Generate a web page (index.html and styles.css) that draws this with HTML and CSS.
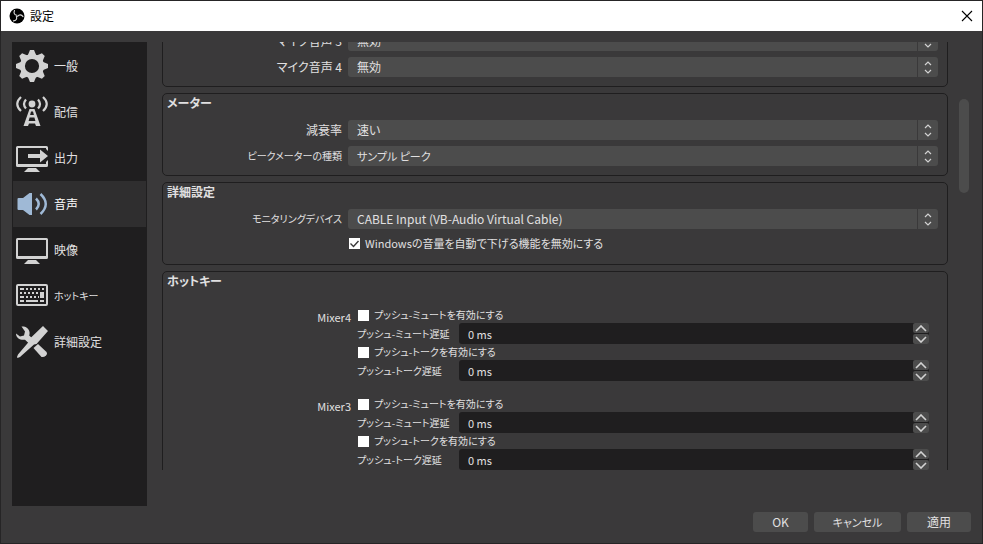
FILE: index.html
```html
<!DOCTYPE html>
<html lang="ja">

<head>
  <meta charset="UTF-8">
  <meta name="viewport" content="width=device-width, initial-scale=1.0">
  <title>設定</title>
  <link rel="stylesheet" href="styles.css">
</head>

<body>
  <header class="titlebar">
    <svg class="logo" viewBox="0 0 16 16" width="16" height="16">
      <circle cx="8" cy="8" r="7.5" fill="#000"/>
      <g fill="none" stroke="#ddd" stroke-width="1.1" stroke-linecap="round">
        <path d="M5.500 2.500C4.300 4.800 5.500 7 8 7.300"/>
        <path d="M5.500 2.500C4.300 4.800 5.500 7 8 7.300" transform="rotate(120 8 8)"/>
        <path d="M5.500 2.500C4.300 4.800 5.500 7 8 7.300" transform="rotate(240 8 8)"/>
      </g>
    </svg>
    <h1>設定</h1>
    <button class="close" aria-label="閉じる">
      <svg viewBox="0 0 12 12" width="12" height="12"><path d="M1 1l10 10M11 1L1 11" stroke="#000" stroke-width="1.1"/></svg>
    </button>
  </header>

  <main class="main">
    <nav class="sidebar">
      <a href="#general">
        <svg viewBox="0 0 32 32">
          <circle cx="16" cy="16" r="9.6" fill="none" stroke="currentColor" stroke-width="5"/>
          <g fill="currentColor">
            <path id="tooth" d="M11.500 6L14 0h4l2.500 6z"/>
            <use href="#tooth" transform="rotate(45 16 16)"/>
            <use href="#tooth" transform="rotate(90 16 16)"/>
            <use href="#tooth" transform="rotate(135 16 16)"/>
            <use href="#tooth" transform="rotate(180 16 16)"/>
            <use href="#tooth" transform="rotate(225 16 16)"/>
            <use href="#tooth" transform="rotate(270 16 16)"/>
            <use href="#tooth" transform="rotate(315 16 16)"/>
          </g>
        </svg>
        一般
      </a>
      <a href="#stream">
        <svg viewBox="0 0 32 32">
          <circle cx="16" cy="8" r="3.4" fill="currentColor"/>
          <g fill="none" stroke="currentColor" stroke-width="2.2">
            <path d="M10 3.500q-4 4.500 0 9M5 1q-7.500 7 0 14M22 3.500q4 4.500 0 9M27 1q7.500 7 0 14"/>
          </g>
          <path fill="currentColor" fill-rule="evenodd" d="M13.500 13h5L24.500 30h-4.500l-1-2.500h-6L12 30H7.500zM15 15.500l-.9 3.500h3.800l-.9-3.500zM13.600 21.500l-1 3.500h6.800l-1-3.500z"/>
        </svg>
        配信
      </a>
      <a href="#output">
        <svg viewBox="0 0 32 32" fill="currentColor">
          <path d="M1.500 4h29q1.500 0 1.500 1.500V9l-2-2V6H2v16h28v-2l2-2v5.500q0 1.500-1.500 1.500h-29Q0 25 0 23.500v-18Q0 4 1.500 4z"/>
          <path d="M12 12h12V7.500l8 6.500-8 6.500V16H12zM12 26h8l4 4H8z"/>
        </svg>
        出力
      </a>
      <a href="#audio" class="active">
        <svg viewBox="0 0 32 32">
          <path fill="currentColor" d="M2.500 10H7l6.500-5H16v22h-2.500L7 22H2.500q-1 0-1-1V11q0-1 1-1z"/>
          <path fill="none" stroke="currentColor" stroke-width="2.500" d="M20 10.500q5.500 5.500 0 11M24.500 6q10.500 10 0 20"/>
        </svg>
        音声
      </a>
      <a href="#video">
        <svg viewBox="0 0 32 32" fill="currentColor">
          <path fill-rule="evenodd" d="M1.500 4h29q1.500 0 1.500 1.500v18q0 1.500-1.500 1.500h-29Q0 25 0 23.500v-18Q0 4 1.500 4zM2 6v16h28V6z"/>
          <path d="M12 26h8l4 4H8z"/>
        </svg>
        映像
      </a>
      <a href="#hotkeys" class="long">
        <svg viewBox="0 0 32 32">
          <rect x="1" y="5" width="30" height="20" rx="1" fill="none" stroke="currentColor" stroke-width="2"/>
          <g stroke="currentColor" stroke-width="2" fill="none">
            <path d="M4 9h4M10 9h2M14 9h2M18 9h2M22 9h2M26 9h2"/>
            <path d="M4 13h2M8 13h2M12 13h2M16 13h2M20 13h2"/>
            <path d="M4 17h4M10 17h2M14 17h2M18 17h2M22 17h1"/>
            <path d="M4 21h4M10 21h12M24 21h4"/>
          </g>
          <path d="M24 12h4v6h-4z" fill="currentColor"/>
        </svg>
        ホットキー
      </a>
      <a href="#advanced">
        <svg viewBox="0 0 32 32">
          <path fill="currentColor" d="M5.500.500C9 0 13 2 13.500 6c.2 1.500 0 2.500-.3 3.500l4.300 4-4.500 4-4-3.800C4.500 14.500 0 12 0 7.500L4 10.500l4-1L9 5.500z"/>
          <path fill="currentColor" d="M17.500 22l4.500-4L30 25.500q2 2 0 4t-4.500 1.500z"/>
          <path fill="currentColor" d="M27 0l5 5-11.500 13-2.500.500L4 31l-2.500 1L1 31l1-2.500L13.500 15l.5-2.500z"/>
        </svg>
        詳細設定
      </a>
    </nav>

    <div class="content">
      <div class="groups">
        <section class="group devices">
          <div class="row">
            <label for="mic3">マイク音声 3</label>
            <select id="mic3"><option>無効</option></select>
          </div>
          <div class="row">
            <label for="mic4">マイク音声 4</label>
            <select id="mic4"><option>無効</option></select>
          </div>
        </section>

        <section class="group">
          <h2>メーター</h2>
          <div class="row">
            <label for="decay">減衰率</label>
            <select id="decay"><option>速い</option></select>
          </div>
          <div class="row">
            <label for="peak" class="long">ピークメーターの種類</label>
            <select id="peak" class="kana"><option>サンプル ピーク</option></select>
          </div>
        </section>

        <section class="group">
          <h2>詳細設定</h2>
          <div class="row">
            <label for="monitor" class="long">モニタリングデバイス</label>
            <select id="monitor"><option>CABLE Input (VB-Audio Virtual Cable)</option></select>
          </div>
          <div class="row">
            <label class="check kana ducking"><input type="checkbox" checked>Windowsの音量を自動で下げる機能を無効にする</label>
          </div>
        </section>

        <section class="group hotkeys">
          <h2>ホットキー</h2>
          <div class="mixer">
            <h3>Mixer4</h3>
            <div class="fields">
              <label class="check"><input type="checkbox">プッシュ-ミュートを有効にする</label>
              <label for="mute4">プッシュ-ミュート遅延</label>
              <div class="spin">
                <input id="mute4" type="text" value="0 ms">
                <button aria-label="増やす"><svg viewBox="0 0 12 7"><path d="M1 6l5-5 5 5"/></svg></button>
                <button aria-label="減らす"><svg viewBox="0 0 12 7"><path d="M1 1l5 5 5-5"/></svg></button>
              </div>
              <label class="check"><input type="checkbox">プッシュ-トークを有効にする</label>
              <label for="talk4">プッシュ-トーク遅延</label>
              <div class="spin">
                <input id="talk4" type="text" value="0 ms">
                <button aria-label="増やす"><svg viewBox="0 0 12 7"><path d="M1 6l5-5 5 5"/></svg></button>
                <button aria-label="減らす"><svg viewBox="0 0 12 7"><path d="M1 1l5 5 5-5"/></svg></button>
              </div>
            </div>
          </div>
          <div class="mixer">
            <h3>Mixer3</h3>
            <div class="fields">
              <label class="check"><input type="checkbox">プッシュ-ミュートを有効にする</label>
              <label for="mute3">プッシュ-ミュート遅延</label>
              <div class="spin">
                <input id="mute3" type="text" value="0 ms">
                <button aria-label="増やす"><svg viewBox="0 0 12 7"><path d="M1 6l5-5 5 5"/></svg></button>
                <button aria-label="減らす"><svg viewBox="0 0 12 7"><path d="M1 1l5 5 5-5"/></svg></button>
              </div>
              <label class="check"><input type="checkbox">プッシュ-トークを有効にする</label>
              <label for="talk3">プッシュ-トーク遅延</label>
              <div class="spin">
                <input id="talk3" type="text" value="0 ms">
                <button aria-label="増やす"><svg viewBox="0 0 12 7"><path d="M1 6l5-5 5 5"/></svg></button>
                <button aria-label="減らす"><svg viewBox="0 0 12 7"><path d="M1 1l5 5 5-5"/></svg></button>
              </div>
            </div>
          </div>
        </section>
      </div>
      <div class="scrollbar"><div class="thumb"></div></div>
    </div>
  </main>

  <footer class="footer">
    <button>OK</button>
    <button class="wide kana">キャンセル</button>
    <button class="apply">適用</button>
  </footer>
</body>

</html>
```
FILE: styles.css
```css
* {
  box-sizing: border-box;
}

body {
  margin: 0;
  height: 100vh;
  display: flex;
  flex-direction: column;
  overflow: hidden;
  border: 1px solid #262526;
  background-color: #3a393a;
  color: #e1e0e1;
  font-family: "Noto Sans CJK JP", sans-serif;
  font-size: 12px;
  line-height: 16px;
  font-feature-settings: "palt";
}

h1, h2, h3 {
  margin: 0;
  font-size: 12px;
  font-weight: normal;
}

button, input, select {
  font: inherit;
  font-feature-settings: inherit;
  color: inherit;
  border: 0;
  margin: 0;
  padding: 0;
}

.titlebar {
  display: flex;
  align-items: center;
  height: 30px;
  flex: none;
  padding: 0 7px 0 8px;
  background-color: #fff;
  color: #000;
}

.titlebar h1 {
  margin-left: 5px;
  margin-right: auto;
}

.close {
  display: flex;
  padding: 2px;
  background: none;
}

.main {
  display: flex;
  flex: 1;
  min-height: 0;
  padding: 11px 13px 0 11px;
}

/* sidebar */
.sidebar {
  width: 135px;
  flex: none;
  padding: 1px;
  background-color: #1f1e1f;
}

.sidebar a {
  display: flex;
  align-items: center;
  gap: 6px;
  height: 46px;
  padding-left: 3px;
  color: #e1e0e1;
  text-decoration: none;
}

.sidebar svg {
  width: 32px;
  height: 32px;
  color: #d2d2d2;
}

.sidebar .active {
  background-color: #2f2e2f;
  color: #fff;
}

.sidebar .active svg {
  color: #9fb9d6;
}

/* scrolling area */
.content {
  display: flex;
  flex: 1;
  min-width: 0;
  gap: 11px;
  margin-left: 15px;
  margin-bottom: 36px;
}

.groups {
  display: flex;
  flex-direction: column;
  flex: 1;
  gap: 6px;
  overflow: hidden;
}

.group {
  flex: none;
  display: flex;
  flex-direction: column;
  gap: 6px;
  padding: 0 9px 9px 0;
  border: 1px solid #1f1e1f;
  border-radius: 5px;
}

.group h2 {
  height: 20px;
  padding-left: 4px;
  line-height: 18px;
  font-weight: bold;
}

/* first group is scrolled partly out of view */
.devices {
  margin-top: -21px;
  padding-top: 9px;
}

.row {
  display: grid;
  grid-template-columns: 179px 1fr;
  column-gap: 6px;
  height: 20px;
  line-height: 20px;
}

.row label {
  text-align: right;
  white-space: nowrap;
}

select {
  appearance: none;
  height: 20px;
  padding: 0 24px 0 9px;
  border-radius: 3px;
  background: #4c4c4c url("data:image/svg+xml,%3Csvg xmlns='http://www.w3.org/2000/svg' width='21' height='20'%3E%3Cpath d='M.5 0v20' stroke='%233a393a'/%3E%3Cpath d='M8 8l3-3 3 3M8 13l3 3 3-3' fill='none' stroke='%23d2d2d2' stroke-width='1.2'/%3E%3C/svg%3E") no-repeat right;
}

.kana {
  font-size: 11px;
}

.long {
  font-size: 10px;
}

.check {
  display: flex;
  align-items: center;
  gap: 5px;
  height: 16px;
  padding-left: 1px;
}

.check input {
  appearance: none;
  width: 11px;
  height: 11px;
  background-color: #fff;
}

.check input:checked {
  background-image: url("data:image/svg+xml,%3Csvg xmlns='http://www.w3.org/2000/svg' width='11' height='11'%3E%3Cpath d='M1.500 5.500l3 3 5-5.500' fill='none' stroke='%233a393a' stroke-width='1.400'/%3E%3C/svg%3E");
}

.ducking {
  grid-column: 2;
}

/* hotkeys */
.hotkeys {
  padding-right: 18px;
}

.mixer {
  display: grid;
  grid-template-columns: 188px 1fr;
  column-gap: 6px;
  padding-top: 9px;
}

.mixer h3 {
  padding-top: 2px;
  font-size: 11px;
  text-align: right;
}

.fields {
  display: grid;
  grid-template-columns: 96px 1fr;
  grid-template-rows: 16px 21px 16px 21px;
  column-gap: 6px;
  align-items: center;
  white-space: nowrap;
}

.fields label {
  font-size: 10px;
}

.fields .check {
  grid-column: 1 / 3;
}

.spin {
  display: grid;
  grid-template-columns: 1fr 16px;
  grid-template-rows: 10px 10px;
  row-gap: 1px;
  border-radius: 3px;
  background-color: #1f1e1f;
}

.spin input {
  grid-row: 1 / 3;
  min-width: 0;
  padding-left: 9px;
  background: none;
  font-size: 11px;
}

.spin button {
  display: flex;
  align-items: center;
  justify-content: center;
  border-radius: 2px;
  background-color: #4c4c4c;
}

.spin svg {
  width: 12px;
  height: 7px;
  flex: none;
  fill: none;
  stroke: #d2d2d2;
  stroke-width: 1.6;
}

.scrollbar {
  width: 10px;
  padding-top: 57px;
}

.thumb {
  height: 94px;
  border-radius: 5px;
  background-color: #4c4c4c;
}

.footer {
  display: flex;
  justify-content: flex-end;
  gap: 6px;
  padding: 6px 11px 11px;
}

.footer button {
  width: 55px;
  height: 20px;
  border-radius: 3px;
  background-color: #4c4c4c;
}

.footer .wide {
  width: 87px;
}

.footer .apply {
  width: 64px;
}
```
